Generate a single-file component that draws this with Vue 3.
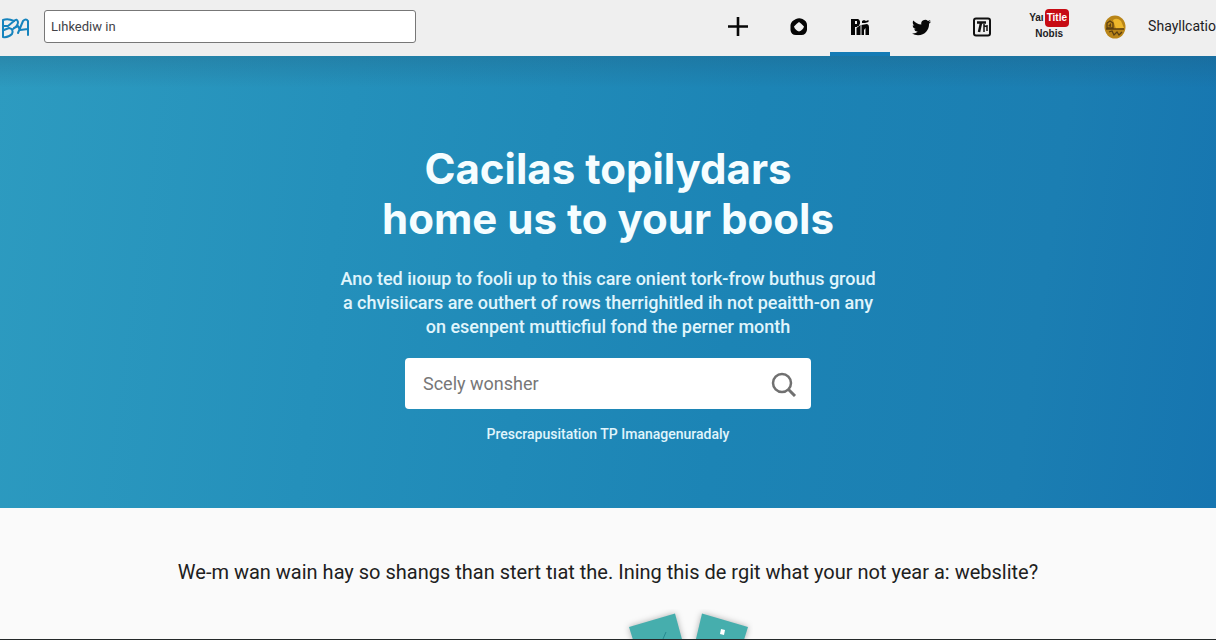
<script setup>
import { ref } from 'vue'

const siteQuery = ref('Lıhkediw in')
const heroQuery = ref('')
</script>

<template>
  <div class="page">
    <header class="topbar">
      <a class="logo" href="#" aria-label="Home">
        <svg width="30" height="24" viewBox="0 0 30 24" fill="none" stroke="#1583bd" stroke-width="2" stroke-linecap="round" stroke-linejoin="round">
          <path d="M3 4V10L8 10L14 5Q8 2 3 4M3 10V21Q8 22 12 18Q14 13 9 12L4 14" />
          <path d="M14 5Q17 2 18 6Q18 10 13 13M14 12L18 10L20 14M18 17L23 5Q26 2 28 5V19M20 14L28 13" />
        </svg>
      </a>
      <input v-model="siteQuery" class="site-search" type="text" aria-label="Site search" />
      <nav class="nav" aria-label="Main">
        <a class="item" href="#" aria-label="Add">
          <svg width="20" height="20" viewBox="0 0 20 20"><path d="M10 0V19M0 9.500H20" stroke="#080808" stroke-width="2.600" /></svg>
        </a>
        <a class="item" href="#" aria-label="Discover">
          <svg width="18" height="18" viewBox="0 0 18 18"><path fill="#050505" fill-rule="evenodd" d="M6 1Q9-.5 12.500 1Q17 3 17 7V12Q16 17 11.500 17H6Q1 17 .5 12V7Q1 3 6 1ZM9 4Q7 5 4 8.500Q5 12 9 13.500Q13 12 14 8.500Q11 5 9 4Z" /></svg>
        </a>
        <a class="item active" href="#" aria-label="Network" aria-current="page">
          <svg width="20" height="18" viewBox="0 0 20 18" fill="#050505"><path fill-rule="evenodd" d="M1 1H8Q10.500 2 10 5.500Q9.500 8 7 8.500V9H5V17H1ZM5 3V6H7V3Z" /><path d="M6.500 10L10.500 7V17H6.500ZM12 3L14 2L16 3L18.500 2V4L15 5L12 5ZM11.500 7L17 6Q19 6.500 19 9V17H15.500V10L14 12V17H11.500Z" /></svg>
        </a>
        <a class="item" href="#" aria-label="Twitter">
          <svg width="19" height="19" viewBox="0 0 24 24" fill="#080808"><path d="M23.953 4.570a10 10 0 01-2.825.775 4.958 4.958 0 002.163-2.723c-.951.555-2.005.959-3.127 1.184a4.920 4.920 0 00-8.384 4.482C7.690 8.095 4.067 6.130 1.640 3.162a4.822 4.822 0 00-.666 2.475c0 1.710.870 3.213 2.188 4.096a4.904 4.904 0 01-2.228-.616v.060a4.923 4.923 0 003.946 4.827 4.996 4.996 0 01-2.212.085 4.936 4.936 0 004.604 3.417 9.867 9.867 0 01-6.102 2.105c-.390 0-.779-.023-1.170-.067a13.995 13.995 0 007.557 2.209c9.053 0 13.998-7.496 13.998-13.985 0-.210 0-.420-.015-.630A9.935 9.935 0 0024 4.590z" /></svg>
        </a>
        <a class="item" href="#" aria-label="Text">
          <svg width="20" height="20" viewBox="0 0 20 20" fill="none" stroke="#111"><rect x="2" y="1.500" width="16" height="17" rx="2" stroke-width="2" /><path d="M5 5.500H14M9 6L7 15" stroke-width="2.500" /><path d="M12 7V15M12 9.500L15 9V14" stroke-width="1.500" /></svg>
        </a>
        <a class="item video" href="#">
          <span class="video-top">Yaı <b class="badge">Title</b></span>
          <span class="video-bottom">Nobis</span>
        </a>
        <a class="item" href="#" aria-label="Profile">
          <svg width="22" height="24" viewBox="0 0 22 24"><ellipse cx="11" cy="12" rx="10.500" ry="11.500" fill="#b98518" /><path d="M9 5Q13 2 17 6L20 13L12 14Z" fill="#edb72b" /><path d="M3 13V8L6 6L9 8V13ZM2 14L20 14M5 17L8 16L10 20L13 17L15 20L18 17" fill="none" stroke="#5b3f10" stroke-width="1.300" /><path d="M4 11L7 8V12Z" fill="#60430e" /></svg>
        </a>
        <a class="name" href="#">Shayllcatio</a>
      </nav>
    </header>

    <main class="main">
      <section class="hero">
        <h1>Cacilas topilydars<br />home us to your bools</h1>
        <p class="lead">
          Ano ted iıoıup to fooli up to this care onient tork-frow buthus groud<br />
          a chvisiicars are outhert of rows therrighitled ih not peaitth-on any<br />
          on esenpent mutticfiul fond the perner month
        </p>
        <form class="search" @submit.prevent>
          <input v-model="heroQuery" type="text" placeholder="Scely wonsher" aria-label="Search" />
          <button type="submit" aria-label="Submit search">
            <svg width="26" height="26" viewBox="0 0 26 26" fill="none" stroke="#707070" stroke-width="2.500"><circle cx="11" cy="12" r="9" /><path d="M17 18L24 25" stroke-width="3" /></svg>
          </button>
        </form>
        <p class="caption">Prescrapusitation TP Imanagenuradaly</p>
      </section>

      <section class="intro">
        <h2>We-m wan wain hay so shangs than stert tıat the. Ining this de rgit what your not year a: webslite?</h2>
        <div class="cards">
          <svg width="130" height="30" viewBox="0 0 130 30" aria-hidden="true">
            <g class="sheets" fill="#46aead"><path d="M6 18L52 4.500L60 34H11Z" /><path d="M79 4.500L125 18L120 34H72Z" /></g>
            <path d="M43 23L40 30" stroke="#278b91" />
            <path d="M98 20L102 21L101 26L97 25Z" fill="#fff" />
          </svg>
        </div>
      </section>
    </main>
  </div>
</template>

<style>
body {
  margin: 0;
}
</style>

<style scoped>
.page {
  display: flex;
  flex-direction: column;
  box-sizing: border-box;
  min-height: 100vh;
  overflow: hidden;
  border-bottom: 1px solid #242829;
  background: #fafafa;
  font-family: Roboto, "Liberation Sans", sans-serif;
}
.topbar {
  display: flex;
  align-items: center;
  height: 56px;
  background: #efefef;
}
.logo {
  display: flex;
  flex: none;
  width: 44px;
}
.site-search {
  box-sizing: border-box;
  flex: 0 1 372px;
  min-width: 80px;
  height: 33px;
  margin: 0 0 3px;
  padding: 0 6px;
  border: 1px solid #777;
  border-radius: 3px;
  background: #fff;
  color: #424247;
  font: 13px Roboto, sans-serif;
}
.nav {
  display: flex;
  flex: none;
  align-self: stretch;
  margin-left: auto;
}
.nav a {
  color: #1c1c1e;
  text-decoration: none;
}
.item {
  display: flex;
  align-items: center;
  justify-content: center;
  box-sizing: border-box;
  width: 60px;
  margin-right: 1px;
  padding-bottom: 2px;
}
.active {
  padding-top: 4px;
  border-bottom: 4px solid #147bb5;
}
.video {
  flex-direction: column;
  width: 72px;
  margin-right: 0;
  padding-bottom: 6px;
  font: bold 10px/14px "Liberation Sans", sans-serif;
}
.video-top {
  display: flex;
  align-items: center;
}
.badge {
  margin-left: 1px;
  padding: 0 2px;
  border-radius: 4px;
  background: #c70c14;
  color: #fff;
  line-height: 18px;
}
.name {
  margin-left: 2px;
  font-size: 14px;
  line-height: 52px;
  white-space: nowrap;
}
.main {
  display: flex;
  flex: 1;
  flex-direction: column;
}
.hero {
  display: flex;
  flex-direction: column;
  align-items: center;
  padding: 88px 24px 64px;
  background:
    linear-gradient(rgba(30, 80, 110, 0.25), rgba(30, 80, 110, 0) 32px),
    linear-gradient(98deg, #2d9bc0 0%, #2490bb 28%, #1c84b5 60%, #1b7eb2 84%, #1675b0 100%);
  color: #f5fdff;
  text-align: center;
}
h1 {
  margin: 0;
  font-family: Inter, sans-serif;
  font-size: 42px;
  font-weight: 700;
  line-height: 50px;
}
.lead {
  margin: 23px 0 19px;
  color: #e0f5fc;
  font-size: 18px;
  font-weight: 500;
  line-height: 24px;
}
.search {
  display: flex;
  align-items: center;
  box-sizing: border-box;
  width: 406px;
  max-width: 100%;
  height: 51px;
  padding: 0 14px 0 18px;
  border-radius: 4px;
  background: #fff;
}
.search input {
  flex: 1;
  min-width: 0;
  padding: 0;
  border: 0;
  outline: 0;
  background: none;
  color: #555;
  font: 18px Roboto, sans-serif;
}
.search input::placeholder {
  color: #777;
  opacity: 1;
}
.search button {
  display: flex;
  padding: 0;
  border: 0;
  background: none;
}
.caption {
  margin: 15px 0 0;
  color: #e0f5fc;
  font-size: 14px;
  font-weight: 500;
  line-height: 20px;
}
.intro {
  padding: 50px 24px 0;
  text-align: center;
}
h2 {
  margin: 0;
  color: #202020;
  font-size: 20px;
  font-weight: 400;
  line-height: 28px;
}
.cards {
  display: flex;
  justify-content: center;
  margin-top: 23px;
  padding-left: 160px;
}
.sheets {
  filter: drop-shadow(0 0 3px rgba(0, 0, 0, 0.3));
}
</style>
